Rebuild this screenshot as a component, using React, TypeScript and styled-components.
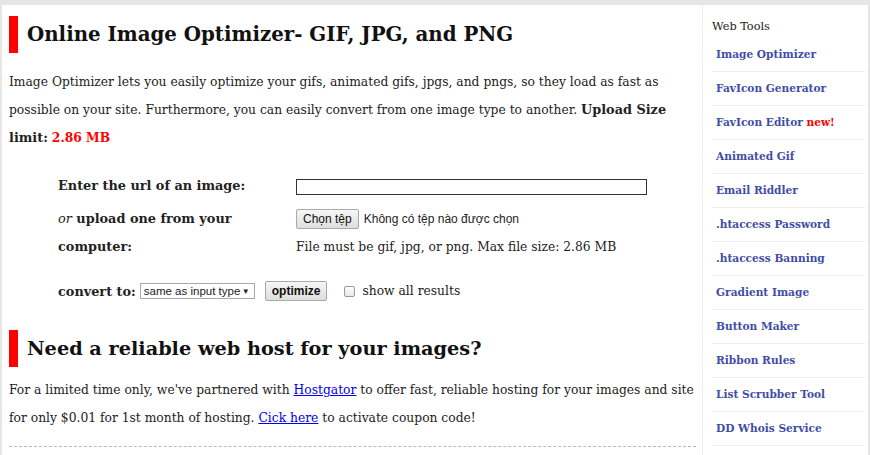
import React from "react";
import styled, { createGlobalStyle } from "styled-components";

const Global = createGlobalStyle`
  html, body { margin: 0; padding: 0; }
  body {
    background: #e6e6e6;
    font-family: "DejaVu Serif", "Liberation Serif", serif;
    color: #222;
  }
`;

const Page = styled.div`
  margin: 5px 2px 0 2px;
  background: #fff;
  display: flex;
  height: 450px;
  overflow: hidden;
`;

const Main = styled.div`
  width: 693px;
  padding-left: 7px;
  flex: none;
`;

const Heading = styled.h1<{ $top: number; $size: number }>`
  margin: ${(p) => p.$top}px 0 0 0;
  border-left: 9px solid #ff0000;
  padding-left: 9px;
  height: 37px;
  line-height: 37px;
  font-size: ${(p) => p.$size}px;
  font-weight: bold;
  color: #111;
`;

const Para = styled.p<{ $top: number }>`
  margin: ${(p) => p.$top}px 0 0 0;
  font-size: 12.3px;
  line-height: 28px;
  white-space: nowrap;
`;

const Red = styled.b`
  color: #ff0000;
`;

const Strong = styled.b`
  font-size: 12.85px;
`;

const FormGrid = styled.div`
  margin: 20px 0 0 49px;
  display: grid;
  grid-template-columns: 238px 1fr;
  font-size: 12.3px;
`;

const Label = styled.div<{ $top?: number }>`
  font-weight: bold;
  font-size: 12.85px;
  line-height: 28px;
  height: 28px;
  margin-top: ${(p) => p.$top || 0}px;
`;

const Field = styled.div<{ $top?: number }>`
  display: flex;
  align-items: center;
  height: 28px;
  line-height: 28px;
  margin-top: ${(p) => p.$top || 0}px;
`;

const UrlInput = styled.input`
  width: 351px;
  height: 16px;
  box-sizing: border-box;
  border: 1px solid #333;
  padding: 0;
  margin: 1px 0 0 0;
`;

const SysButton = styled.button`
  font-family: Arial, "Liberation Sans", sans-serif;
  font-size: 12px;
  height: 20px;
  padding: 0 6px;
  background: linear-gradient(#f6f6f6, #dedede);
  border: 1px solid #a9a9a9;
  border-radius: 2px;
  color: #111;
  margin: 0;
`;

const FileNote = styled.span`
  font-family: Arial, "Liberation Sans", sans-serif;
  font-size: 12px;
  margin-left: 5px;
  color: #222;
`;

const ConvertRow = styled.div`
  margin: 16px 0 0 49px;
  display: flex;
  align-items: center;
  height: 28px;
  font-size: 12.3px;
`;

const Select = styled.div`
  margin-left: 4px;
  width: 115px;
  height: 16px;
  box-sizing: border-box;
  border: 1px solid #a9a9a9;
  font-family: Arial, "Liberation Sans", sans-serif;
  font-size: 11.5px;
  display: flex;
  align-items: center;
  justify-content: space-between;
  padding: 0 4px 0 3px;
  color: #222;
`;

const OptButton = styled(SysButton)`
  margin-left: 10px;
  font-weight: bold;
  padding: 0 6px;
`;

const Check = styled.span`
  margin-left: 17px;
  width: 11px;
  height: 11px;
  box-sizing: border-box;
  border: 1px solid #999;
  border-radius: 2px;
  background: linear-gradient(#fdfdfd, #e8e8e8);
`;

const CheckLabel = styled.span`
  margin-left: 7px;
`;

const Link = styled.a`
  color: #0000ee;
  text-decoration: underline;
`;

const Dashed = styled.div`
  margin-top: 14px;
  border-top: 1px dashed #bbb;
  width: 687px;
`;

const Side = styled.div`
  flex: 1;
  border-left: 1px solid #eee;
  padding: 13px 3px 0 9px;
`;

const SideTitle = styled.div`
  font-size: 11.3px;
  line-height: 18px;
  color: #222;
  margin-bottom: 2px;
`;

const SideItem = styled.div`
  height: 33px;
  line-height: 33px;
  border-bottom: 1px solid #eee;
  padding-left: 4px;
  font-size: 10.6px;
  font-weight: bold;
  color: #3f4ea5;
`;

const New = styled.span`
  color: #ff0000;
`;

const tools = [
  "Image Optimizer",
  "FavIcon Generator",
  "FavIcon Editor",
  "Animated Gif",
  "Email Riddler",
  ".htaccess Password",
  ".htaccess Banning",
  "Gradient Image",
  "Button Maker",
  "Ribbon Rules",
  "List Scrubber Tool",
  "DD Whois Service",
];

export default function App() {
  return (
    <>
      <Global />
      <Page>
        <Main>
          <Heading $top={11} $size={19.8}>
            Online Image Optimizer- GIF, JPG, and PNG
          </Heading>
          <Para $top={15}>
            Image Optimizer lets you easily optimize your gifs, animated gifs, jpgs, and pngs, so they load as fast as
            <br />
            possible on your site. Furthermore, you can easily convert from one image type to another.{" "}
            <Strong>Upload Size</Strong>
            <br />
            <Strong>limit:</Strong> <Red>2.86 MB</Red>
          </Para>
          <FormGrid>
            <Label>Enter the url of an image:</Label>
            <Field>
              <UrlInput type="text" />
            </Field>
            <Label $top={5}>
              <i style={{ fontWeight: "normal" }}>or</i> upload one from your
            </Label>
            <Field $top={5}>
              <SysButton>Chọn tệp</SysButton>
              <FileNote>Không có tệp nào được chọn</FileNote>
            </Field>
            <Label>computer:</Label>
            <Field>File must be gif, jpg, or png. Max file size: 2.86 MB</Field>
          </FormGrid>
          <ConvertRow>
            <Strong>convert to:</Strong>
            <Select>
              <span>same as input type</span>
              <span style={{ fontSize: 8 }}>▼</span>
            </Select>
            <OptButton>optimize</OptButton>
            <Check />
            <CheckLabel>show all results</CheckLabel>
          </ConvertRow>
          <Heading $top={25} $size={19.3}>
            Need a reliable web host for your images?
          </Heading>
          <Para $top={9}>
            For a limited time only, we've partnered with <Link>Hostgator</Link> to offer fast, reliable hosting for
            your images and site
            <br />
            for only $0.01 for 1st month of hosting. <Link>Cick here</Link> to activate coupon code!
          </Para>
          <Dashed />
        </Main>
        <Side>
          <SideTitle>Web Tools</SideTitle>
          {tools.map((t) => (
            <SideItem key={t}>
              {t}
              {t === "FavIcon Editor" && <New> new!</New>}
            </SideItem>
          ))}
        </Side>
      </Page>
    </>
  );
}
